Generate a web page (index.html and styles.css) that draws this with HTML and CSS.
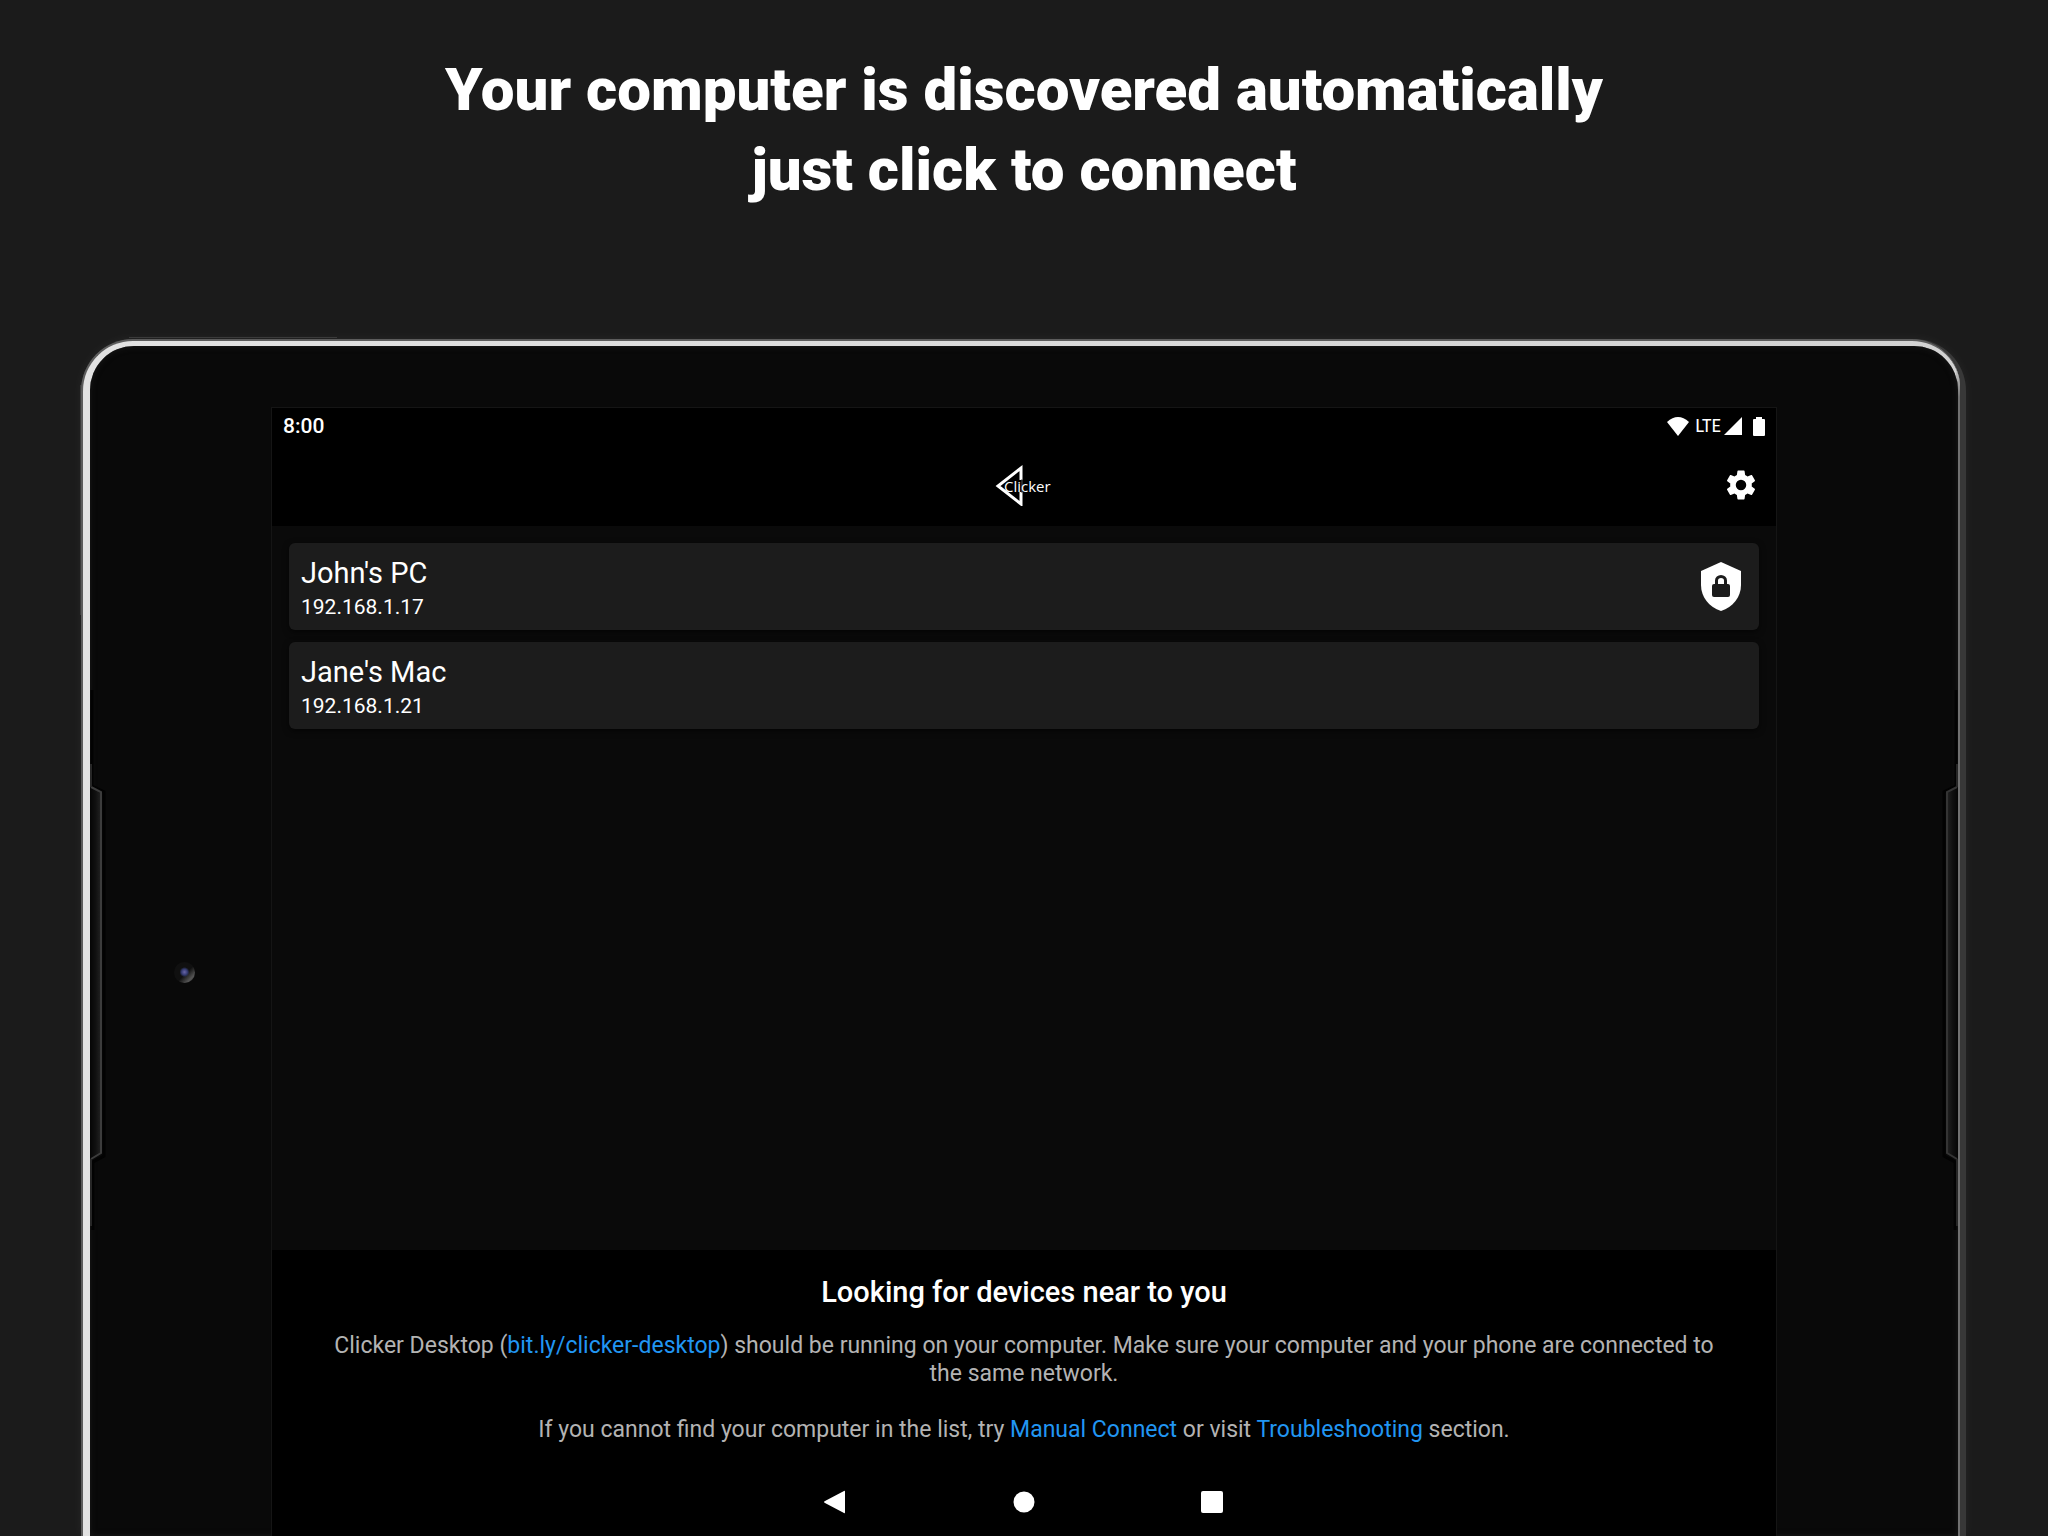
FILE: index.html
```html
<!DOCTYPE html>
<html lang="en">
<head>
    <meta charset="UTF-8">
    <meta name="viewport" content="width=device-width, initial-scale=1.0">
    <title>Clicker</title>
    <link rel="stylesheet" href="styles.css">
</head>
<body>
    <h1 class="headline">Your computer is discovered automatically<br>just click to connect</h1>

    <div class="tablet">
        <div class="rim">
            <div class="glass">
                <div class="bezel">
                    <svg class="speaker" viewBox="0 0 16 540" aria-hidden="true">
                        <defs>
                            <linearGradient id="slot" x1="0" x2="1" y1="0" y2="0">
                                <stop offset="0" stop-color="#050505"/>
                                <stop offset="0.5" stop-color="#101010"/>
                                <stop offset="1" stop-color="#222"/>
                            </linearGradient>
                        </defs>
                        <path d="M2 0V96L14 102V466L3 472V540" fill="none" stroke="#020202" stroke-width="3"/>
                        <path d="M0 97L11 103V463L0 470Z" fill="url(#slot)"/>
                        <path d="M1 97L11 102V463L1 469" fill="none" stroke="#3c3c3c" stroke-width="2"/>
                        <path d="M1 74V97M1 469V536" fill="none" stroke="#262626" stroke-width="2"/>
                    </svg>
                    <div class="camera"></div>
                </div>

                <div class="screen">
                    <div class="statusbar">
                        <span class="time">8:00</span>
                        <div class="status-icons">
                            <svg width="22" height="19" viewBox="0 0 22 19" aria-hidden="true"><path d="M0 5Q11-5 22 5L11 19Z" fill="#fff"/></svg>
                            <span class="network">LTE</span>
                            <svg class="signal" width="18" height="18" viewBox="0 0 18 18" aria-hidden="true"><path d="M18 0V18H0Z" fill="#fff"/></svg>
                            <svg width="12" height="19" viewBox="0 0 12 19" aria-hidden="true"><path d="M3 0H9V2H11Q12 2 12 3V18Q12 19 11 19H1Q0 19 0 18V3Q0 2 1 2H3Z" fill="#fff"/></svg>
                        </div>
                    </div>

                    <div class="appbar">
                        <svg class="logo" width="60" height="42" viewBox="0 0 60 42" role="img" aria-label="Clicker">
                            <path d="M27 16V4L4 22L27 40V28" fill="none" stroke="#fff" stroke-width="3"/>
                            <path d="M28 15V29" stroke="#555" stroke-width="1"/>
                            <text class="logo-text" x="10" y="28">Clicker</text>
                        </svg>
                        <button class="btn-settings" aria-label="Settings">
                            <svg width="36" height="36" viewBox="0 0 24 24" aria-hidden="true"><path fill="#fff" d="M19.14 12.94c.04-.3.06-.61.06-.94s-.02-.64-.07-.94l2.03-1.58c.18-.14.23-.41.12-.61l-1.92-3.32c-.12-.22-.37-.29-.59-.22l-2.39.96c-.5-.38-1.03-.7-1.62-.94l-.36-2.54c-.04-.24-.24-.41-.48-.41h-3.84c-.24 0-.43.17-.47.41l-.36 2.54c-.59.24-1.13.57-1.62.94l-2.39-.96c-.22-.08-.47 0-.59.22L2.74 8.87c-.12.21-.08.47.12.61l2.03 1.58c-.05.3-.09.63-.09.94s.02.64.07.94l-2.03 1.58c-.18.14-.23.41-.12.61l1.92 3.32c.12.22.37.29.59.22l2.39-.96c.5.38 1.03.7 1.62.94l.36 2.54c.05.24.24.41.48.41h3.84c.24 0 .44-.17.47-.41l.36-2.54c.59-.24 1.13-.56 1.62-.94l2.39.96c.22.08.47 0 .59-.22l1.92-3.32c.12-.22.07-.47-.12-.61zM12 15.5a3.5 3.5 0 1 1 0-7 3.5 3.5 0 0 1 0 7z"/></svg>
                        </button>
                    </div>

                    <div class="devices">
                        <button class="device">
                            <span class="device-info">
                                <span class="device-name">John's PC</span>
                                <span class="device-ip">192.168.1.17</span>
                            </span>
                            <svg width="40" height="49" viewBox="0 0 40 49" aria-hidden="true">
                                <path d="M20 0L40 9V23C40 35 32 45 20 49C8 45 0 35 0 23V9Z" fill="#fff"/>
                                <path d="M15.500 23V18.500a4.500 4 0 0 1 9 0V23" fill="none" stroke="#1c1c1c" stroke-width="3"/>
                                <rect x="11" y="22" width="18" height="13" rx="2" fill="#1c1c1c"/>
                            </svg>
                        </button>
                        <button class="device">
                            <span class="device-info">
                                <span class="device-name">Jane's Mac</span>
                                <span class="device-ip">192.168.1.21</span>
                            </span>
                        </button>
                    </div>

                    <div class="help">
                        <h2>Looking for devices near to you</h2>
                        <p>Clicker Desktop (<a href="#">bit.ly/clicker-desktop</a>) should be running on your computer. Make sure your computer and your phone are connected to the same network.</p>
                        <p>If you cannot find your computer in the list, try <a href="#">Manual Connect</a> or visit <a href="#">Troubleshooting</a> section.</p>
                    </div>

                    <div class="navbar">
                        <button aria-label="Back"><svg width="24" height="24" viewBox="0 0 24 24" aria-hidden="true"><path d="M20 1Q21 0 21 2V22Q21 24 20 23L1 13Q-1 12 1 11Z" fill="#fff"/></svg></button>
                        <button aria-label="Home"><svg width="24" height="24" viewBox="0 0 24 24" aria-hidden="true"><circle cx="12" cy="12" r="10.500" fill="#fff"/></svg></button>
                        <button aria-label="Recent apps"><svg width="24" height="24" viewBox="0 0 24 24" aria-hidden="true"><rect x="1" y="1" width="22" height="22" rx="2" fill="#fff"/></svg></button>
                    </div>
                </div>

                <div class="bezel bezel-right">
                    <svg class="speaker" viewBox="0 0 16 540" aria-hidden="true">
                        <path d="M2 0V96L14 102V466L3 472V540" fill="none" stroke="#020202" stroke-width="3"/>
                        <path d="M0 97L11 103V463L0 470Z" fill="url(#slot)"/>
                        <path d="M1 97L11 102V463L1 469" fill="none" stroke="#343434" stroke-width="2"/>
                        <path d="M1 74V97M1 469V536" fill="none" stroke="#262626" stroke-width="2"/>
                    </svg>
                </div>
            </div>
        </div>
    </div>
</body>
</html>
```
FILE: styles.css
```css
* { box-sizing: border-box; }
body {
    margin: 0;
    height: 100vh;
    overflow: hidden;
    display: flex;
    flex-direction: column;
    background: #1b1b1b;
    color: white;
    font-family: Roboto, "Liberation Sans", sans-serif;
}
button {
    padding: 0;
    border: none;
    background: none;
    color: inherit;
    font: inherit;
    cursor: pointer;
}
svg { display: block; flex-shrink: 0; }
a { color: #2196f3; text-decoration: none; }

.headline {
    margin: 0;
    padding: 50px 40px 129px;
    text-align: center;
    font-size: 60px;
    line-height: 80px;
    font-weight: 900;
}

/* tablet frame */
.tablet {
    position: relative;
    flex: 1;
    display: flex;
    margin: 0 82px 0 81px;
    padding-right: 6px;
    border-radius: 52px 52px 0 0;
    background: #383838;
    box-shadow: 0 0 12px rgba(255, 255, 255, 0.05);
}
/* side keys */
.tablet::before, .tablet::after {
    content: "";
    position: absolute;
    background: #3a3a3a;
}
.tablet::before { top: -2px; left: 48px; width: 208px; height: 1px; }
.tablet::after { top: 46px; left: -1px; width: 1px; height: 230px; }
.rim {
    flex: 1;
    display: flex;
    padding: 5px 2px 0 7px;
    border: solid #5c5c5c;
    border-width: 2px 0 0 2px;
    border-radius: 52px 48px 0 0;
    background:
        linear-gradient(to bottom, #dadada 24px, #707070 56px) right / 4px 100% no-repeat,
        linear-gradient(to right, #e2e2e2, #d2d2d2);
}
.glass {
    flex: 1;
    display: flex;
    border-radius: 44px 44px 0 0;
    background: #090909;
    box-shadow: inset 0 0 6px #1a1a1a;
}
.bezel {
    width: 181px;
    padding-top: 344px;
    display: flex;
    align-items: flex-start;
}
.bezel-right { transform: scaleX(-1); }
.speaker { width: 16px; height: 540px; }
.camera {
    width: 21px;
    height: 21px;
    margin: 272px 0 0 68px;
    border-radius: 50%;
    background:
        radial-gradient(circle at 50% 48%, #6a66a8 0, #333a70 3px, transparent 5px),
        linear-gradient(135deg, #101010 55%, #555 80%, #161616);
}

/* screen */
.screen {
    flex: 1;
    margin-top: 61px;
    display: flex;
    flex-direction: column;
    border: 1px solid #151515;
    border-bottom: none;
    background: #0a0a0a;
}
.statusbar {
    height: 36px;
    padding: 0 11px;
    display: flex;
    align-items: center;
    justify-content: space-between;
    background: black;
}
.time { font-size: 21px; font-weight: 500; }
.status-icons { display: flex; align-items: center; }
.network {
    margin: 0 3px 0 6px;
    font-family: "Roboto Condensed", "Liberation Sans Narrow", Roboto, sans-serif;
    font-size: 19px;
    line-height: 20px;
}
.signal { margin-right: 11px; }
.appbar {
    height: 82px;
    padding: 0 17px;
    display: grid;
    grid-template-columns: 1fr auto 1fr;
    align-items: center;
    background: black;
}
.logo { grid-column: 2; }
.logo-text { fill: white; font-family: "Open Sans", sans-serif; font-size: 15px; }
.btn-settings { justify-self: end; }
.devices {
    flex: 1;
    padding: 17px;
    display: flex;
    flex-direction: column;
    gap: 12px;
}
.device {
    height: 87px;
    padding: 0 18px 0 12px;
    display: flex;
    align-items: center;
    justify-content: space-between;
    border-radius: 6px;
    background: #1c1c1c;
    text-align: left;
    box-shadow: 0 2px 6px rgba(0, 0, 0, 0.6);
}
.device-info { padding-top: 4px; display: flex; flex-direction: column; }
.device-name { font-size: 29px; line-height: 36px; }
.device-ip { font-size: 21px; line-height: 32px; }
.help {
    padding: 24px 48px 0;
    background: black;
    text-align: center;
    color: #b3b3b3;
}
.help h2 {
    margin: 0 0 22px;
    color: white;
    font-size: 29px;
    line-height: 36px;
    font-weight: 500;
}
.help p { margin: 0 0 28px; font-size: 23px; line-height: 28px; }
.navbar {
    height: 64px;
    padding-bottom: 4px;
    display: flex;
    justify-content: center;
    align-items: center;
    gap: 164px;
    background: black;
}
```
